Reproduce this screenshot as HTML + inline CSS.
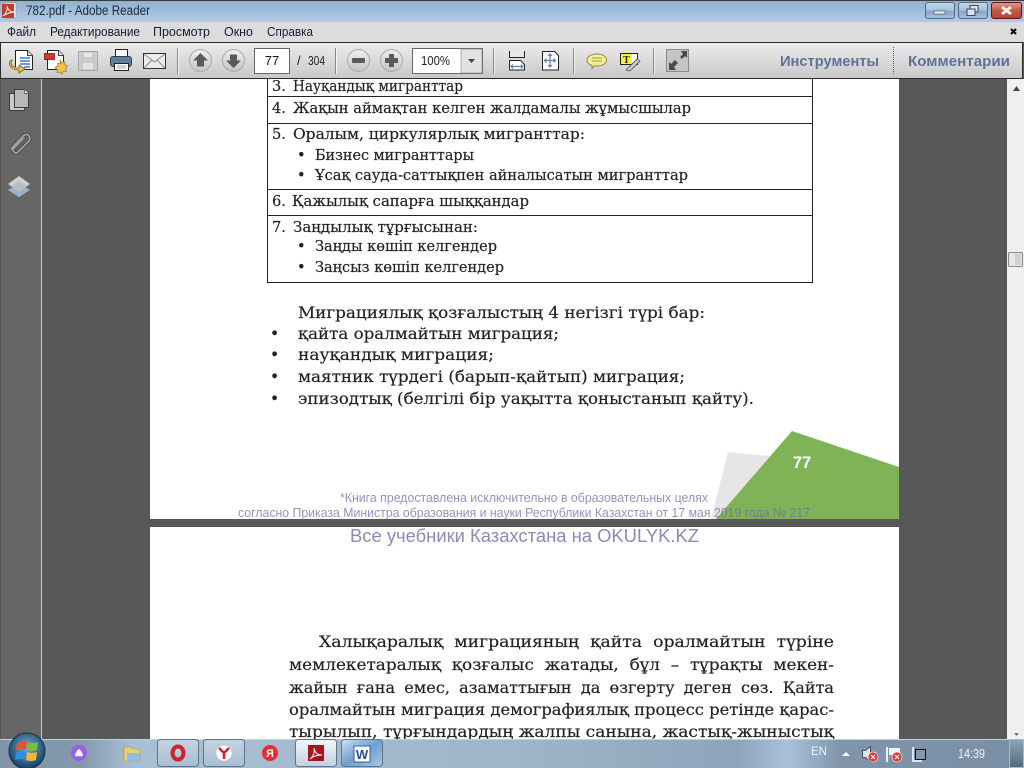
<!DOCTYPE html>
<html><head><meta charset="utf-8"><style>
html,body{margin:0;padding:0;width:1024px;height:768px;overflow:hidden;background:#585858}
svg{display:block;position:absolute;left:0;top:0}
.ui{font-family:"Liberation Sans",sans-serif;font-size:12px;fill:#1a1a33}
.d{font-family:"DejaVu Serif","Liberation Serif",serif;font-size:14.6px;fill:#222;stroke:#222;stroke-width:.18}
.e{font-family:"DejaVu Serif","Liberation Serif",serif;font-size:15.6px;fill:#222;stroke:#222;stroke-width:.18}
</style></head><body>
<svg width="1024" height="768" viewBox="0 0 1024 768" xmlns="http://www.w3.org/2000/svg">
<defs>
<linearGradient id="tb" x1="0" y1="0" x2="0" y2="1"><stop offset="0" stop-color="#8fb0d0"/><stop offset="1" stop-color="#b2cbe2"/></linearGradient>
<linearGradient id="tool" x1="0" y1="0" x2="0" y2="1"><stop offset="0" stop-color="#ececec"/><stop offset="1" stop-color="#c8c8c8"/></linearGradient>
<linearGradient id="task" x1="0" y1="0" x2="1" y2="0"><stop offset="0" stop-color="#7f94aa"/><stop offset=".08" stop-color="#8599ae"/><stop offset=".13" stop-color="#a9bfd4"/><stop offset=".5" stop-color="#9fb5ca"/><stop offset=".72" stop-color="#8ea4ba"/><stop offset=".77" stop-color="#a9c2da"/><stop offset=".82" stop-color="#8095ab"/><stop offset="1" stop-color="#7a8fa5"/></linearGradient>
<linearGradient id="btn" x1="0" y1="0" x2="0" y2="1"><stop offset="0" stop-color="#dce6f0"/><stop offset="1" stop-color="#a9bdd2"/></linearGradient>
<linearGradient id="btnw" x1="0" y1="0" x2="0" y2="1"><stop offset="0" stop-color="#f4f7fa"/><stop offset="1" stop-color="#c0d0e0"/></linearGradient>
<linearGradient id="btnb" x1="0" y1="0" x2="1" y2="1"><stop offset="0" stop-color="#cfe0f0"/><stop offset=".5" stop-color="#6f9fd0"/><stop offset="1" stop-color="#a8c8e6"/></linearGradient>
<linearGradient id="red" x1="0" y1="0" x2="0" y2="1"><stop offset="0" stop-color="#e09a88"/><stop offset=".5" stop-color="#c25a45"/><stop offset="1" stop-color="#b8402c"/></linearGradient>
<linearGradient id="wb" x1="0" y1="0" x2="0" y2="1"><stop offset="0" stop-color="#c5d8ea"/><stop offset=".5" stop-color="#a5bfd9"/><stop offset=".55" stop-color="#86a5c4"/><stop offset="1" stop-color="#a8c4de"/></linearGradient>
<radialGradient id="orb" cx=".5" cy=".4" r=".6"><stop offset="0" stop-color="#6fb2d8"/><stop offset="1" stop-color="#123c5e"/></radialGradient>
<linearGradient id="rb" x1="0" y1="0" x2="0" y2="1"><stop offset="0" stop-color="#f0f0f0"/><stop offset="1" stop-color="#c4c4c4"/></linearGradient>
<linearGradient id="sd" x1="0" y1="0" x2="0" y2="1"><stop offset="0" stop-color="#8fa3b6"/><stop offset="1" stop-color="#55697e"/></linearGradient>
</defs>

<!-- document area -->
<rect x="0" y="79" width="1024" height="660" fill="#585858"/>
<rect x="1" y="79" width="40" height="660" fill="#666"/>
<rect x="41" y="79" width="1" height="660" fill="#c8c8c8"/>
<rect x="150" y="79" width="749" height="440" fill="#fff"/>
<rect x="150" y="527" width="749" height="212" fill="#fff"/>

<!-- scrollbar -->
<rect x="1007" y="79" width="17" height="660" fill="#f0f0f0"/>
<path d="M1013 91l3.500-5 3.500 5z" fill="#444"/>
<rect x="1008.500" y="252.500" width="14" height="14" rx="1.500" fill="#e6e6e6" stroke="#888"/>
<rect x="1015" y="254" width="6" height="11" fill="#cfcfcf"/>
<path d="M1014 733l2.500 3 2.500-3z" fill="#777"/>

<!-- table -->
<g fill="none" stroke="#222" stroke-width="1">
<path d="M267.500 79V282.500H812.500V79"/>
<path d="M267 96.500H812M267 123.500H812M267 189.500H812M267 215.500H812"/>
</g>
<g class="d">
<text x="272" y="91">3.</text><text x="293" y="91" textLength="170" lengthAdjust="spacingAndGlyphs">Науқандық мигранттар</text>
<text x="272" y="113">4.</text><text x="293" y="113" textLength="398" lengthAdjust="spacingAndGlyphs">Жақын аймақтан келген жалдамалы жұмысшылар</text>
<text x="272" y="139">5.</text><text x="293" y="139" textLength="292" lengthAdjust="spacingAndGlyphs">Оралым, циркулярлық мигранттар:</text>
<text x="297" y="160">•</text>
<text x="315" y="160" textLength="159" lengthAdjust="spacingAndGlyphs">Бизнес мигранттары</text>
<text x="297" y="180">•</text>
<text x="315" y="180" textLength="373" lengthAdjust="spacingAndGlyphs">Ұсақ сауда-саттықпен айналысатын мигранттар</text>
<text x="272" y="206">6.</text><text x="292" y="206" textLength="237" lengthAdjust="spacingAndGlyphs">Қажылық сапарға шыққандар</text>
<text x="272" y="232">7.</text><text x="293" y="232" textLength="185" lengthAdjust="spacingAndGlyphs">Заңдылық тұрғысынан:</text>
<text x="297" y="251">•</text>
<text x="315" y="251" textLength="182" lengthAdjust="spacingAndGlyphs">Заңды көшіп келгендер</text>
<text x="297" y="272">•</text>
<text x="315" y="272" textLength="189" lengthAdjust="spacingAndGlyphs">Заңсыз көшіп келгендер</text>
</g>
<g class="e">
<text x="298" y="318" textLength="407" lengthAdjust="spacingAndGlyphs">Миграциялық қозғалыстың 4 негізгі түрі бар:</text>
<text x="270" y="339">•</text>
<text x="298" y="339" textLength="261" lengthAdjust="spacingAndGlyphs">қайта оралмайтын миграция;</text>
<text x="270" y="360">•</text>
<text x="298" y="360" textLength="196" lengthAdjust="spacingAndGlyphs">науқандық миграция;</text>
<text x="270" y="382">•</text>
<text x="298" y="382" textLength="387" lengthAdjust="spacingAndGlyphs">маятник түрдегі (барып-қайтып) миграция;</text>
<text x="270" y="404">•</text>
<text x="298" y="404" textLength="456" lengthAdjust="spacingAndGlyphs">эпизодтық (белгілі бір уақытта қоныстанып қайту).</text>
</g>

<!-- page corner -->
<path d="M728 452L790 458 731 519H711z" fill="#e6e6e6"/>
<path d="M792 431L899 467V519H716z" fill="#7fb356"/>
<text x="802" y="468" text-anchor="middle" font-family="Liberation Sans,sans-serif" font-weight="700" font-size="16.500" fill="#fff">77</text>
<g font-family="Liberation Sans,sans-serif" font-size="13" fill="#6e68a8" fill-opacity=".72">
<text x="340" y="502" textLength="368" lengthAdjust="spacingAndGlyphs">*Книга предоставлена исключительно в образовательных целях</text>
<text x="238" y="517" textLength="572" lengthAdjust="spacingAndGlyphs">согласно Приказа Министра образования и науки Республики Казахстан от 17 мая 2019 года № 217</text>
</g>
<text x="350" y="542" textLength="349" lengthAdjust="spacingAndGlyphs" font-family="Liberation Sans,sans-serif" font-size="18.500" fill="#8d88b8">Все учебники Казахстана на OKULYK.KZ</text>

<g class="e">
<text x="319" y="647" textLength="515" lengthAdjust="spacingAndGlyphs" style="word-spacing:5px">Халықаралық миграцияның қайта оралмайтын түріне</text>
<text x="289" y="670" textLength="545" lengthAdjust="spacingAndGlyphs" style="word-spacing:5px">мемлекетаралық қозғалыс жатады, бұл – тұрақты мекен-</text>
<text x="289" y="693" textLength="545" lengthAdjust="spacingAndGlyphs" style="word-spacing:4px">жайын ғана емес, азаматтығын да өзгерту деген сөз. Қайта</text>
<text x="289" y="715" textLength="545" lengthAdjust="spacingAndGlyphs">оралмайтын миграция демографиялық процесс ретінде қарас-</text>
<text x="289" y="737" textLength="545" lengthAdjust="spacingAndGlyphs">тырылып, тұрғындардың жалпы санына, жастық-жыныстық</text>
</g>

<!-- left panel icons -->
<path d="M9.500 93.500h15v17h-15z" fill="#c9c9c9" stroke="#3c3c3c"/>
<path d="M14.500 89.500h10l4 4v14h-14z" fill="#b8b8b8" stroke="#3c3c3c"/>
<path d="M24.500 89.500v4h4" fill="#eee" stroke="#666"/>
<g fill="none" stroke-linecap="round">
<path d="M11 149L23 136q4-3 6 0t-1 6L18 152q-2 2-4 0t0-4L24 138" stroke="#444" stroke-width="3.500"/>
<path d="M11 149L23 136q4-3 6 0t-1 6L18 152q-2 2-4 0t0-4L24 138" stroke="#a2a2a2" stroke-width="1.800"/>
</g>
<path d="M8 190l11-7 11 7-11 7z" fill="#9db2c4"/>
<path d="M8 184l11-8 11 8-11 8z" fill="#cfcfcf"/>
<path d="M11 186l8-5 8 5-8 6z" fill="#b4bec6"/>

<!-- title bar -->
<rect x="0" y="0" width="1024" height="22" fill="url(#tb)"/>
<rect x="0" y="0" width="1024" height="1" fill="#3c3c3c"/>
<rect x="5" y="3" width="11" height="15" fill="#eee" stroke="#888" stroke-width=".5"/>
<rect x="2" y="4" width="12" height="14" fill="#c7382c"/>
<path d="M3 16c3-2 5-7 4-10 1 4 3 6 8 6-5 0-9 2-12 4z" fill="none" stroke="#fff" stroke-width="1"/>
<text x="26" y="15" font-family="Liberation Sans,sans-serif" font-size="13.500" fill="#1c2a3c" textLength="124" lengthAdjust="spacingAndGlyphs">782.pdf - Adobe Reader</text>
<!-- window buttons -->
<rect x="925.500" y="2.500" width="29" height="16" rx="2.500" fill="url(#wb)" stroke="#4f6a88"/>
<rect x="934" y="11" width="11" height="3" fill="#eef3f8" stroke="#33475c" stroke-width=".6"/>
<rect x="958.500" y="2.500" width="29" height="16" rx="2.500" fill="url(#wb)" stroke="#4f6a88"/>
<rect x="970" y="5.500" width="8" height="6.500" fill="#d7e3ee" stroke="#33475c"/>
<rect x="967" y="9" width="8" height="6.500" fill="#d7e3ee" stroke="#33475c"/>
<rect x="991.500" y="2.500" width="30" height="16" rx="2.500" fill="url(#red)" stroke="#5a1620"/>
<path d="M1002 7l9 7M1011 7l-9 7" stroke="#f4f0ee" stroke-width="3"/>

<!-- menu bar -->
<rect x="0" y="22" width="1024" height="20" fill="#dcdcdc"/>
<g class="ui" style="font-size:12.500px">
<text x="7" y="36" textLength="29" lengthAdjust="spacingAndGlyphs">Файл</text>
<text x="50" y="36" textLength="90" lengthAdjust="spacingAndGlyphs">Редактирование</text>
<text x="153" y="36" textLength="57" lengthAdjust="spacingAndGlyphs">Просмотр</text>
<text x="224" y="36" textLength="29" lengthAdjust="spacingAndGlyphs">Окно</text>
<text x="267" y="36" textLength="46" lengthAdjust="spacingAndGlyphs">Справка</text>
</g>
<path d="M1011 29l5 5M1016 29l-5 5" stroke="#000" stroke-width="2"/>

<!-- toolbar -->
<rect x="0.500" y="42.500" width="1022" height="36" fill="url(#tool)" stroke="#2a2a2a"/>
<!-- open -->
<path d="M15.500 50.500h12l5 5v14h-17z" fill="#fff" stroke="#222"/>
<path d="M27.500 50.500v5h5" fill="#ddd" stroke="#444"/>
<path d="M20 58h10M20 61h10M20 64h10M24 67h6" stroke="#3f78c8" stroke-width="1.400"/>
<path d="M12 60c-3 5 2 8 7 8v-3l6 4-6 4v-3c-6 0-11-3-9-9z" fill="#e9c45c" stroke="#7a5a12" stroke-width=".8"/>
<!-- create -->
<path d="M47.500 50.500h11l5 5v14h-16z" fill="#fff" stroke="#222"/>
<path d="M58.500 50.500v5h5" fill="#ddd" stroke="#444"/>
<rect x="44.500" y="53.500" width="10" height="6" fill="#d8342c" stroke="#7a1a16" stroke-width=".8"/>
<path d="M60 60l1.800 2.500 3-.8 0 3 2.700 1.300-2 2.500 1 2.800-3 0-1.500 2.700-2-2-3 .6.300-3-2.300-2 2.600-1.500.2-3 3 .7z" fill="#efc24a" stroke="#9a7a1a" stroke-width=".7"/>
<!-- save -->
<rect x="78.500" y="51.500" width="19" height="19" rx="1" fill="#cfcfcf" stroke="#a4a4a4"/>
<rect x="83" y="52" width="10" height="6" fill="#e6e6e6" stroke="#aaa" stroke-width=".7"/>
<rect x="82" y="62" width="12" height="8" fill="#e3e3e3" stroke="#aaa" stroke-width=".7"/>
<!-- print -->
<rect x="115.500" y="49.500" width="12" height="8" fill="#fff" stroke="#222"/>
<rect x="110.500" y="56.500" width="21" height="10" rx="2.500" fill="#5c7f9e" stroke="#2c3f50"/>
<rect x="114.500" y="63.500" width="14" height="7" fill="#fff" stroke="#222"/>
<path d="M117 66h9M117 68h9" stroke="#888" stroke-width=".7"/>
<!-- mail -->
<rect x="143.500" y="53.500" width="22" height="15" fill="#ececec" stroke="#333"/>
<path d="M144 54l10.500 8 10.500-8M144 68l8-8M165 68l-8-8" fill="none" stroke="#888"/>
<rect x="177" y="48" width="1" height="26" fill="#888"/><rect x="178" y="48" width="1" height="26" fill="#f4f4f4"/>
<!-- up/down -->
<circle cx="200.500" cy="60.500" r="11" fill="url(#rb)" stroke="#aaa"/>
<path d="M200.500 53l7.500 7.500h-4v6h-7v-6h-4z" fill="#5b5b5b"/>
<circle cx="233.500" cy="60.500" r="11" fill="url(#rb)" stroke="#aaa"/>
<path d="M233.500 68l7.500-7.500h-4v-6h-7v6h-4z" fill="#5b5b5b"/>
<rect x="254.500" y="48.500" width="35" height="25" fill="#fff" stroke="#666"/>
<text x="272" y="65" text-anchor="middle" class="ui" style="fill:#111;font-size:13px">77</text>
<text x="297" y="65" class="ui" style="fill:#222;font-size:13px">/</text>
<text x="308" y="65" class="ui" style="fill:#222;font-size:13px" textLength="17" lengthAdjust="spacingAndGlyphs">304</text>
<rect x="335" y="48" width="1" height="26" fill="#888"/><rect x="336" y="48" width="1" height="26" fill="#f4f4f4"/>
<!-- zoom -->
<circle cx="358.500" cy="60.500" r="11" fill="url(#rb)" stroke="#aaa"/>
<rect x="352" y="58" width="13" height="5" rx="1" fill="#5b5b5b"/>
<circle cx="391.500" cy="60.500" r="11" fill="url(#rb)" stroke="#aaa"/>
<path d="M389 54h5v4h4v5h-4v4h-5v-4h-4v-5h4z" fill="#5b5b5b"/>
<rect x="412.500" y="48.500" width="70" height="25" fill="#fff" stroke="#666"/>
<rect x="461" y="49" width="21" height="24" fill="#e2e2e2" stroke="#888" stroke-width=".6"/>
<path d="M468 59h7l-3.500 4z" fill="#444"/>
<text x="421" y="65" class="ui" style="fill:#222;font-size:13px" textLength="29" lengthAdjust="spacingAndGlyphs">100%</text>
<rect x="493" y="48" width="1" height="26" fill="#888"/><rect x="494" y="48" width="1" height="26" fill="#f4f4f4"/>
<!-- fit width -->
<path d="M509.500 51v6.500h15V51" fill="#e8e8e8" stroke="#222"/>
<path d="M509.500 70V60.500h11l4 4V70z" fill="#fff" stroke="#222"/>
<path d="M511 66.500h12M513 64.500l-2 2 2 2M521 64.500l2 2-2 2" fill="none" stroke="#5a7eb8" stroke-width="1.200"/>
<!-- fit page -->
<path d="M542.500 51.500h12l4 4v14.500h-16z" fill="#fff" stroke="#222"/>
<path d="M550 54v13M544.500 60.500h11M548 56l2-2 2 2M548 65l2 2 2-2M546.500 58.500l-2 2 2 2M553.500 58.500l2 2-2 2" fill="none" stroke="#5a7eb8" stroke-width="1.200"/>
<rect x="573" y="48" width="1" height="26" fill="#888"/><rect x="574" y="48" width="1" height="26" fill="#f4f4f4"/>
<!-- comment -->
<path d="M597 54c5.500 0 9.500 2.500 9.500 6s-4 6-9.500 6c-1 0-2 0-3 0l-2 3v-3.500c-3-1-5-3-5-5.500 0-3.500 4.500-6 10-6z" fill="#f5ee8a" stroke="#8a8a60"/>
<path d="M592 58h10M592 61h10" stroke="#9a9a60"/>
<!-- note -->
<rect x="620.500" y="53.500" width="17" height="11" fill="#fff" stroke="#222"/>
<rect x="621" y="54" width="11" height="10" fill="#f7f23a"/>
<text x="626.500" y="63" text-anchor="middle" font-family="Liberation Serif,serif" font-weight="700" font-size="10" fill="#222">T</text>
<path d="M626 70l11-11 3 2-10 10z" fill="#c9c9c9" stroke="#555" stroke-width=".8"/>
<rect x="653" y="48" width="1" height="26" fill="#888"/><rect x="654" y="48" width="1" height="26" fill="#f4f4f4"/>
<!-- expand -->
<rect x="666.500" y="49.500" width="22" height="22" fill="#c4c4c4" stroke="#8a8a8a"/>
<path d="M669 70v-8l2 2 4-4 3 3-4 4 2 3zM687 51v7l-2-2-3 3-2-2 3-3-2-3z" fill="#4a4a4a"/>
<text x="780" y="66" font-family="Liberation Sans,sans-serif" font-size="15" font-weight="700" fill="#5d7396" textLength="99" lengthAdjust="spacingAndGlyphs">Инструменты</text>
<path d="M893.500 47v28" stroke="#555" stroke-dasharray="1 1"/>
<text x="908" y="66" font-family="Liberation Sans,sans-serif" font-size="15" font-weight="700" fill="#5d7396" textLength="102" lengthAdjust="spacingAndGlyphs">Комментарии</text>

<!-- taskbar -->
<rect x="0" y="739" width="1024" height="29" fill="url(#task)"/>
<rect x="0" y="739" width="1024" height="1" fill="#c2d2e0"/>
<circle cx="27" cy="751" r="18" fill="url(#orb)" stroke="#1a2f42"/>
<path d="M17 743q5-3 10-1l-1 8q-5-2-10 0z" fill="#e4572e"/>
<path d="M28 742q5 2 10 0l-1 8q-5 2-10 0z" fill="#7eb93c"/>
<path d="M16 752q5-2 10 0l-1 8q-5-2-10 0z" fill="#2f8fd8"/>
<path d="M27 752q5 2 10 0l-1 8q-5 2-10 0z" fill="#f3b92f"/>
<circle cx="79" cy="753" r="8" fill="#9a5ee8"/>
<path d="M79 749q1.500 0 4 6 0 2-4 1-4 1-4-1 2.500-6 4-6z" fill="#fff"/>
<path d="M124 747h7l2 2h7v12h-16z" fill="#e8cf7a" stroke="#a89040" stroke-width=".6"/>
<rect x="127" y="753" width="13" height="8" fill="#8ebfe0"/>
<rect x="157.500" y="739.500" width="41" height="27" rx="3" fill="url(#btn)" fill-opacity=".55" stroke="#5f7488"/>
<rect x="203.500" y="739.500" width="41" height="27" rx="3" fill="url(#btn)" fill-opacity=".55" stroke="#5f7488"/>
<ellipse cx="178" cy="753" rx="5.500" ry="6.500" fill="none" stroke="#d3202a" stroke-width="4"/>
<circle cx="224" cy="753" r="8" fill="#fff" stroke="#bbb" stroke-width=".5"/>
<path d="M219 748l5 5 5-5M224 753v6" fill="none" stroke="#d3202a" stroke-width="2.500"/>
<circle cx="270" cy="753" r="8" fill="#ee2a2a"/>
<text x="270" y="757" text-anchor="middle" font-family="Liberation Sans,sans-serif" font-size="11" font-weight="700" fill="#fff">Я</text>
<rect x="295.500" y="739.500" width="41" height="27" rx="3" fill="url(#btnw)" stroke="#5f7488"/>
<rect x="341.500" y="739.500" width="41" height="27" rx="3" fill="url(#btnb)" stroke="#5f7488"/>
<rect x="308" y="745" width="16" height="16" fill="#a3161c"/>
<path d="M310 759c3-2 5-7 4-11 1 5 3 7 8 7-4 0-9 1-12 4z" fill="none" stroke="#fff" stroke-width="1"/>
<rect x="354" y="746" width="16" height="16" fill="#fff" stroke="#2f5fa8"/>
<text x="362" y="759" text-anchor="middle" font-family="Liberation Sans,sans-serif" font-size="13" font-weight="700" fill="#1f4f9a">W</text>

<!-- tray -->
<text x="811" y="755" font-family="Liberation Sans,sans-serif" font-size="11.500" fill="#f0f4f8">EN</text>
<path d="M842 756l4-4 4 4z" fill="#fff"/>
<path d="M862.500 750.500h3l5-4v15l-5-4h-3z" fill="#dce4ea" stroke="#333" stroke-width=".8"/>
<circle cx="873" cy="757" r="5" fill="#e23a3a" stroke="#fff" stroke-width=".6"/>
<path d="M871 755l4 4M875 755l-4 4" stroke="#fff" stroke-width="1.200"/>
<path d="M887 747v15" stroke="#eee" stroke-width="2"/>
<path d="M889 748h11v7h-11z" fill="#f4f4f4"/>
<circle cx="897" cy="757" r="5" fill="#e23a3a" stroke="#fff" stroke-width=".6"/>
<path d="M895 755l4 4M899 755l-4 4" stroke="#fff" stroke-width="1.200"/>
<rect x="915.500" y="749.500" width="10" height="10" fill="#8599ad" stroke="#111"/>
<path d="M913 747v14h9" fill="none" stroke="#fff" stroke-width="1.500"/>
<text x="958" y="758" font-family="Liberation Sans,sans-serif" font-size="13" fill="#f0f4f8" textLength="27" lengthAdjust="spacingAndGlyphs">14:39</text>
<rect x="1009.500" y="739.500" width="14" height="28" fill="url(#sd)" stroke="#a8b8c6"/>
</svg>
</body></html>
